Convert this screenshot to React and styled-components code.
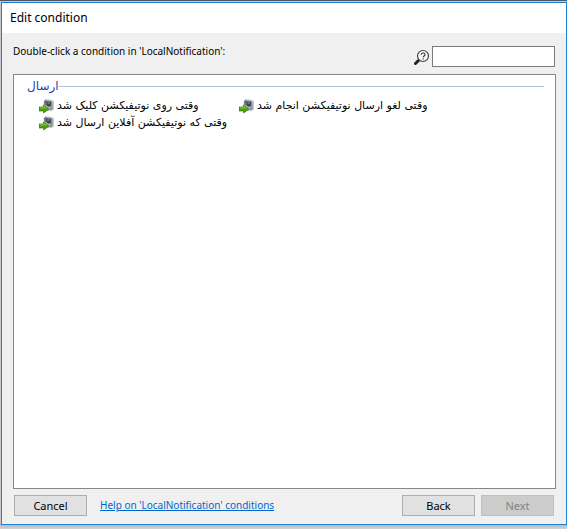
import React from 'react'
import styled, { createGlobalStyle } from 'styled-components'

const GlobalStyle = createGlobalStyle`
  * {
    box-sizing: border-box;
  }

  body {
    margin: 0;
    background: #c9c7cd;
    color: #000;
    font-family: 'Noto Sans', 'DejaVu Sans', sans-serif;
    font-size: 11px;
  }
`

const Screen = styled.div`
  display: flex;
  flex-direction: column;
  min-height: 100vh;
  border-top: 1px solid #55555f;
  padding: 1px 0 4px 1px;
  background: linear-gradient(to top, #d3d1d6, #b5b4bb 5px, #c9c7cd 6px);
`

const Dialog = styled.main`
  flex: 1;
  display: flex;
  flex-direction: column;
  border: 1px solid #1883d7;
  background: #f0f0f0;
`

const TitleBar = styled.header`
  height: 30px;
  padding-left: 8px;
  background: #fff;

  h1 {
    margin: 0;
    font-size: 12px;
    font-weight: 400;
    line-height: 30px;
  }
`

const Body = styled.div`
  flex: 1;
  display: flex;
  flex-direction: column;
  padding: 13px 10px 8px 11px;
`

const SearchRow = styled.div`
  display: flex;
  justify-content: space-between;
  padding-right: 1px;
  margin-bottom: 7px;
`

const Prompt = styled.p`
  margin: 0;
  font-size: 10px;
  line-height: 11px;
`

const Search = styled.label`
  display: flex;
  align-items: center;
  gap: 2px;

  input {
    width: 123px;
    height: 21px;
    padding: 0 4px;
    border: 1px solid #7a7a7a;
    background: #fff;
    font: inherit;
    outline: none;
  }
`

const Conditions = styled.section`
  flex: 1;
  padding: 4px 11px 4px 13px;
  border: 1px solid #828790;
  background: #fff;
`

const GroupTitle = styled.h2`
  display: flex;
  align-items: center;
  height: 14px;
  margin: 0 0 4px;
  color: #1e3fb4;
  font-family: 'DejaVu Sans', sans-serif;
  font-size: 12px;
  font-weight: 400;

  &:after {
    content: '';
    flex: 1;
    height: 1px;
    background: #b0bfde;
  }
`

const List = styled.ul`
  display: grid;
  grid-template-columns: repeat(auto-fill, 200px);
  grid-auto-rows: 17px;
  margin: 0;
  padding: 0 0 0 12px;
  list-style: none;
`

const Condition = styled.button`
  display: flex;
  align-items: center;
  gap: 2px;
  height: 17px;
  padding: 0;
  border: 0;
  background: none;
  color: #000;
  font-family: 'DejaVu Sans', sans-serif;
  font-size: 11px;
  white-space: nowrap;
`

const Footer = styled.footer`
  display: flex;
  align-items: center;
  gap: 6px;
  margin-top: 6px;
  padding: 0 2px 0 1px;
`

const Button = styled.button`
  width: 73px;
  height: 21px;
  padding: 0;
  border: 1px solid #adadad;
  background: #e1e1e1;
  color: #000;
  font: inherit;

  &:disabled {
    border-color: #bfbfbf;
    background: #ccc;
    color: #838383;
  }
`

const HelpLink = styled.a`
  margin: 0 auto 0 7px;
  color: #0066cc;
  font-size: 10px;
  line-height: 15px;
`

const SearchIcon = () => (
  <svg width='16' height='16' viewBox='0 0 16 16' aria-hidden='true'>
    <path d='M1.5 14.5L5.5 10.5' stroke='#222' strokeWidth='3' strokeLinecap='round' />
    <circle cx='9' cy='7' r='5.5' fill='#f5f5f5' stroke='#444' strokeWidth='1.2' />
    <path d='M7.2 5.7c0-2.3 3.8-2.2 3.8 0 0 1.4-1.8 1.3-1.8 2.6M9.2 9.2v1.3' fill='none' stroke='#333' strokeWidth='1.1' />
  </svg>
)

const ConditionIcon = () => (
  <svg width='16' height='16' viewBox='0 0 16 16' aria-hidden='true'>
    <path d='M4.5 3.5L6.5 1l6 .8 2.5 1.7v8L12.5 13H9L5 9z' fill='#c3c8cd' />
    <path d='M5 3l2-1 1 1.5v4L5.5 7z' fill='#68727c' />
    <path d='M7.5 3l4.5.5V8l-2 1-2.5-1.5z' fill='#3f4953' />
    <path d='M8.5 4.2h2v1.3h-2z' fill='#8d98a3' />
    <path d='M12 3.5h1.5v8L11 12V8.5h1z' fill='#8a939c' />
    <path d='M0 9h4.5V7l5.8 4-5.8 4v-2H0z' fill='#4e9b12' stroke='#39780a' strokeWidth='.7' />
    <path d='M1 10h4.2V8.7l2.7 1.9' fill='none' stroke='#9bd453' strokeWidth='.9' />
  </svg>
)

const conditions = [
  'وقتی روی نوتیفیکشن کلیک شد',
  'وقتی لغو ارسال نوتیفیکشن انجام شد',
  'وقتی که نوتیفیکشن آفلاین ارسال شد'
]

export default function App () {
  return (
    <Screen>
      <GlobalStyle />
      <Dialog>
        <TitleBar>
          <h1>Edit condition</h1>
        </TitleBar>
        <Body>
          <SearchRow>
            <Prompt>Double-click a condition in 'LocalNotification':</Prompt>
            <Search>
              <SearchIcon />
              <input type='text' aria-label='Search conditions' />
            </Search>
          </SearchRow>
          <Conditions>
            <GroupTitle><span dir='rtl'>ارسال</span></GroupTitle>
            <List>
              {conditions.map(name => (
                <li key={name}>
                  <Condition type='button'>
                    <ConditionIcon />
                    <span dir='rtl'>{name}</span>
                  </Condition>
                </li>
              ))}
            </List>
          </Conditions>
          <Footer>
            <Button type='button'>Cancel</Button>
            <HelpLink href='#help'>Help on 'LocalNotification' conditions</HelpLink>
            <Button type='button'>Back</Button>
            <Button type='button' disabled>Next</Button>
          </Footer>
        </Body>
      </Dialog>
    </Screen>
  )
}
